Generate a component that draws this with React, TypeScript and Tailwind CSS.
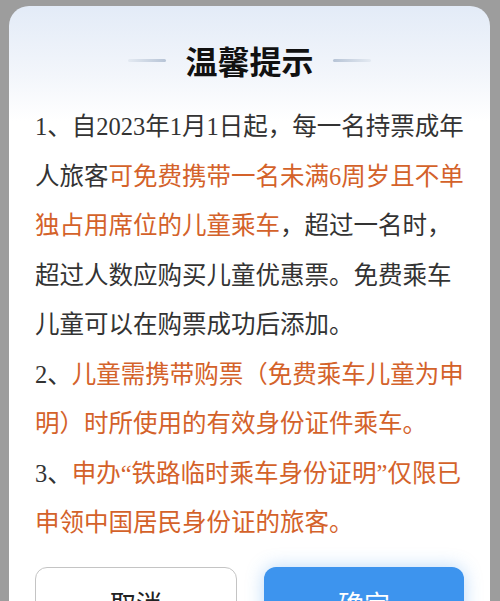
const FONT = "font-['Liberation_Serif','Noto_Sans_CJK_SC',sans-serif]";

function Dark({ children }: { children: React.ReactNode }) {
  return <span className="text-[#333333]">{children}</span>;
}

function Hot({ children }: { children: React.ReactNode }) {
  return <span className="text-[#d4622a]">{children}</span>;
}

const lines: React.ReactNode[] = [
  <Dark>1、自2023年1月1日起，每一名持票成年</Dark>,
  <>
    <Dark>人旅客</Dark>
    <Hot>可免费携带一名未满6周岁且不单</Hot>
  </>,
  <>
    <Hot>独占用席位的儿童乘车</Hot>
    <Dark>，超过一名时，</Dark>
  </>,
  <Dark>超过人数应购买儿童优惠票。免费乘车</Dark>,
  <Dark>儿童可以在购票成功后添加。</Dark>,
  <>
    <Dark>2、</Dark>
    <Hot>儿童需携带购票（免费乘车儿童为申</Hot>
  </>,
  <Hot>明）时所使用的有效身份证件乘车。</Hot>,
  <>
    <Dark>3、</Dark>
    <Hot>申办“铁路临时乘车身份证明”仅限已</Hot>
  </>,
  <Hot>申领中国居民身份证的旅客。</Hot>,
];

export default function App() {
  return (
    <div className="flex h-[601px] w-[500px] flex-col overflow-hidden bg-[#9d9d9d] px-[9px] pt-[6px] pr-[10px]">
      <div className="flex flex-1 flex-col rounded-t-[20px] bg-[linear-gradient(180deg,#e3ebf7_0px,#f3f6fb_70px,#ffffff_115px)] px-[26px]">
        <div className="flex items-center justify-center gap-[19px] pt-[34px]">
          <span className="h-[3px] w-[38px] rounded-full bg-linear-to-r from-[#e4eaf2] to-[#b7c4d6]" />
          <h1 className="text-[32px] leading-[40px] font-bold tracking-[0px] text-[#111111] font-['Noto_Sans_CJK_SC',sans-serif]">
            温馨提示
          </h1>
          <span className="h-[3px] w-[38px] rounded-full bg-linear-to-r from-[#b7c4d6] to-[#e4eaf2]" />
        </div>

        <div className={`mt-[22px] text-[24.5px] leading-[49.5px] whitespace-nowrap ${FONT}`}>
          {lines.map((line, i) => (
            <div key={i}>{line}</div>
          ))}
        </div>

        <div className="mt-[19px] flex gap-[27px]">
          <button className="flex h-[72px] flex-1 items-center justify-center rounded-[12px] border border-[#c4c4c4] bg-white text-[26px] text-[#222222] font-['Noto_Sans_CJK_SC',sans-serif]">
            取消
          </button>
          <button className="flex h-[72px] flex-1 items-center justify-center rounded-[12px] bg-[#3d94ee] text-[26px] text-white shadow-[0_0_18px_rgba(61,148,238,0.35)] font-['Noto_Sans_CJK_SC',sans-serif]">
            确定
          </button>
        </div>
      </div>
    </div>
  );
}
